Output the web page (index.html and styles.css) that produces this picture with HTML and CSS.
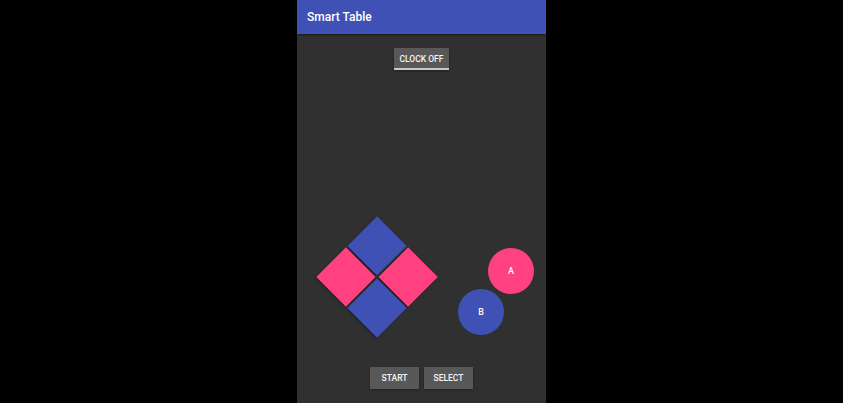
FILE: index.html
```
<!DOCTYPE html>
<html>
<head>
<meta charset="utf-8">
<link rel="stylesheet" href="styles.css">
</head>
<body>
<div class="phone">
  <header class="appbar">Smart Table</header>
  <div class="topbar">
    <button class="btn btn-toggle">CLOCK OFF</button>
  </div>
  <div class="spacer"></div>
  <div class="controls">
    <div class="dpad">
      <div class="cell blue"></div>
      <div class="cell pink"></div>
      <div class="cell pink"></div>
      <div class="cell blue"></div>
    </div>
    <div class="round round-a">A</div>
    <div class="round round-b">B</div>
  </div>
  <div class="bottombar">
    <button class="btn">START</button>
    <button class="btn">SELECT</button>
  </div>
</div>
</body>
</html>
```
FILE: styles.css
```
html, body {
  margin: 0;
  height: 100%;
  background: #000;
}
body {
  display: flex;
  justify-content: center;
  font-family: Roboto, "Liberation Sans", sans-serif;
}
.phone {
  width: 249px;
  height: 403px;
  background: #303030;
  display: flex;
  flex-direction: column;
}
.appbar {
  height: 34px;
  box-sizing: border-box;
  background: #3F51B5;
  color: #fff;
  font-size: 12px;
  font-weight: 500;
  padding: 10px 0 0 10px;
  box-shadow: 0 1px 2px rgba(0,0,0,0.5);
  position: relative;
  z-index: 1;
}
.topbar {
  display: flex;
  justify-content: center;
  padding-top: 14px;
}
.btn {
  border: none;
  background: #585858;
  color: #f5f5f5;
  font-family: Roboto, "Liberation Sans", sans-serif;
  font-size: 8.5px;
  font-weight: 500;
  height: 22px;
  padding: 0;
  width: 49px;
  box-shadow: 0 1px 2px rgba(0,0,0,0.35);
}
.btn-toggle {
  width: 55px;
  border-bottom: 2px solid #c8c8c8;
  padding-top: 2px;
}
.spacer {
  flex: 1;
}
.controls {
  position: relative;
  height: 124px;
}
.dpad {
  position: absolute;
  left: 37px;
  top: 18px;
  width: 86px;
  height: 86px;
  display: grid;
  grid-template-columns: 1fr 1fr;
  grid-template-rows: 1fr 1fr;
  gap: 2px;
  transform: rotate(45deg);
}
.cell {
  box-shadow: 0 1px 2px rgba(0,0,0,0.45);
}
.pink { background: #FF4081; }
.blue { background: #3F51B5; }
.round {
  position: absolute;
  width: 46px;
  height: 46px;
  border-radius: 50%;
  color: #fff;
  font-size: 9px;
  font-weight: 500;
  display: flex;
  align-items: center;
  justify-content: center;
}
.round-a {
  background: #FF4081;
  left: 191px;
  top: 32px;
}
.round-b {
  background: #3F51B5;
  left: 161px;
  top: 73px;
}
.bottombar {
  display: flex;
  justify-content: center;
  gap: 5px;
  margin-top: 27px;
  margin-bottom: 14px;
}
```
